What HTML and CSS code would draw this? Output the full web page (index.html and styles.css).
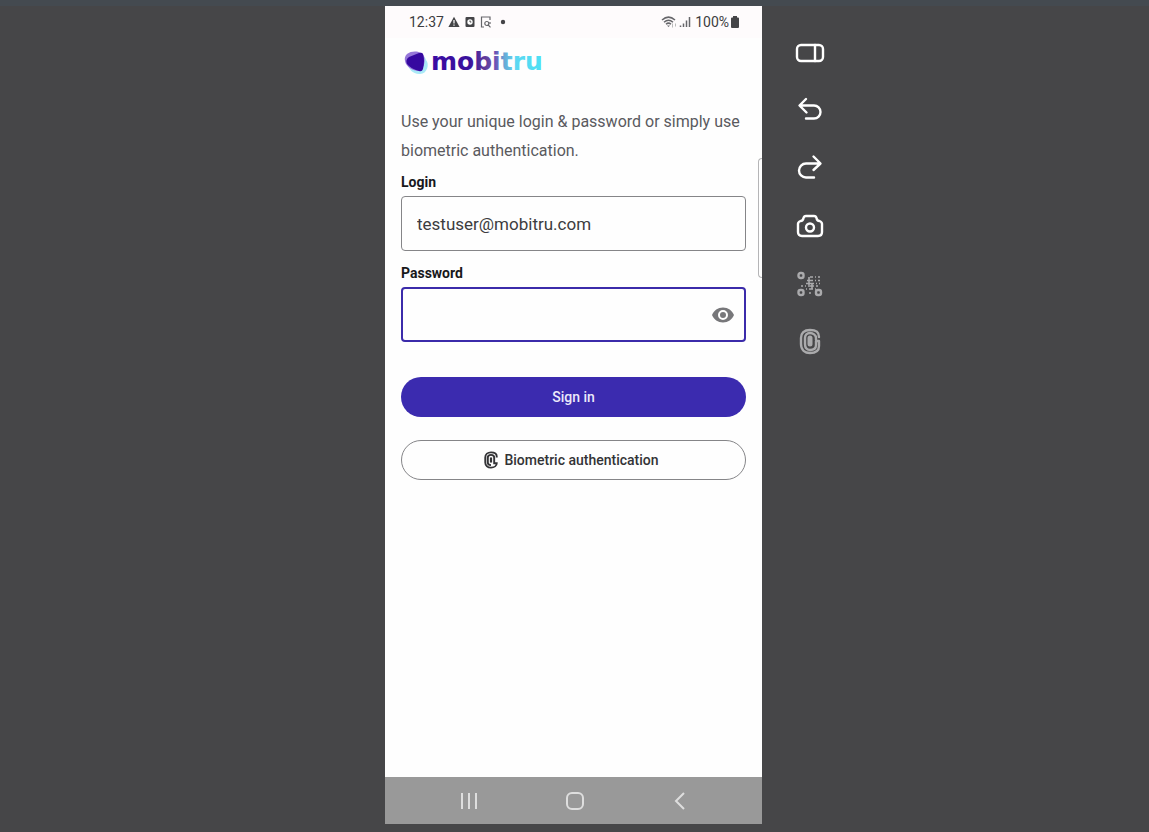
FILE: index.html
```html
<!DOCTYPE html>
<html lang="en">
<head>
<meta charset="utf-8">
<meta name="viewport" content="width=device-width, initial-scale=1">
<title>Mobitru</title>
<link rel="stylesheet" href="styles.css">
</head>
<body>
<div class="page">
  <main class="phone">
    <div class="status">
      <div class="status-group">
        <span>12:37</span>
        <svg width="12" height="12" viewBox="0 0 12 12"><path d="M6 .8 11.6 11H.4Z" fill="#444447"/><path d="M6 4v3.500M6 8.500v1.300" stroke="#fff" stroke-width="1.200"/></svg>
        <svg class="gap" width="10" height="12" viewBox="0 0 10 12"><rect x=".5" y="1" width="9" height="10" rx="1" fill="#444447"/><circle cx="5" cy="6" r="2.700" fill="#fff"/><path d="M5 4.500V6h1.300" fill="none" stroke="#444447"/></svg>
        <svg class="gap" width="12" height="12" viewBox="0 0 12 12" fill="none" stroke="#66666a" stroke-width="1.200"><path d="M4 11H1.500V1H10v3"/><circle cx="6.800" cy="7.500" r="2"/><path d="m8.200 9 2.300 2.300M10 6v2"/></svg>
        <svg class="gap" width="10" height="12" viewBox="0 0 10 12"><circle cx="6" cy="6" r="2.200" fill="#444447"/></svg>
      </div>
      <div class="status-group right">
        <svg width="17" height="14" viewBox="0 0 17 14" fill="none" stroke="#66666a" stroke-width="1.500"><path d="M1 5Q7.500-.800 14 5M3 7.200q4.500-4 9 0M5 9.300q2.500-2.300 5 0"/><path d="m6 10.500 1.500 1.500L9 10.500Z" fill="#66666a" stroke="none"/><path d="M11.500 8.500v4M14.500 8.500v3" stroke="#bbb" stroke-width="1"/></svg>
        <svg width="12" height="12" viewBox="0 0 12 12" stroke="#66666a" stroke-width="1.500"><path d="M1.500 9.500V11M4.500 7.500V11M7.500 4.500V11M10.500 1v10"/></svg>
        <span class="charge">100%</span>
        <svg width="10" height="14" viewBox="0 0 10 14"><path d="M3 1h4v1.500h1q1 0 1 1V12q0 1-1 1H2q-1 0-1-1V3.500q0-1 1-1h1Z" fill="#444447"/></svg>
      </div>
    </div>
    <div class="content">
      <svg class="logo" width="160" height="38" viewBox="0 0 160 38" role="img" aria-label="mobitru">
        <defs>
          <linearGradient id="word" gradientUnits="userSpaceOnUse" x1="30" y1="0" x2="145" y2="0">
            <stop offset="0" stop-color="#3a0ca3"/><stop offset=".32" stop-color="#3a129c"/><stop offset=".46" stop-color="#613e9b"/><stop offset=".54" stop-color="#6951b5"/><stop offset=".62" stop-color="#69a9d6"/><stop offset=".72" stop-color="#5cd8f2"/><stop offset="1" stop-color="#48e2f5"/>
          </linearGradient>
        </defs>
        <path d="M8 14C14 9 22 13 23 18c4 4 1 15-7 14C10 32 5 27 4 20c0-3 2-5 4-6Z" fill="#a9e9f7"/>
        <path d="M4 12c5-4 15-3 17 2 2 7-1 13-5 15C10 29 3 25 2 19q-1-4 2-7Z" fill="#9677d9"/>
        <path d="M16 11q3-1 4 1 2 7 0 15-1 3-4 2-8-2-12-7-2-4 2-7Z" fill="#3609a0"/>
        <text class="word" x="28" y="28">mobitru</text>
      </svg>
      <p class="intro">Use your unique login &amp; password or simply use biometric authentication.</p>
      <form class="form">
        <label for="login">Login</label>
        <input id="login" class="field" type="text" value="testuser@mobitru.com">
        <label for="password" class="next">Password</label>
        <div class="field focused">
          <input id="password" type="password">
          <button type="button" class="plain" aria-label="Show password">
            <svg width="24" height="24" viewBox="0 0 24 24" fill="#77777a"><path d="M12 4.500C7 4.500 2.730 7.610 1 12c1.730 4.390 6 7.500 11 7.500s9.270-3.110 11-7.500c-1.730-4.390-6-7.500-11-7.500ZM12 17a5 5 0 1 1 0-10 5 5 0 0 1 0 10Zm0-8a3 3 0 1 0 0 6 3 3 0 0 0 0-6Z"/></svg>
          </button>
        </div>
        <button type="button" class="btn primary">Sign in</button>
        <button type="button" class="btn outline">
          <svg width="14" height="18" viewBox="0 0 22 28" fill="none" stroke="#333336" stroke-width="3"><path d="M20 10v-1.500C20 4 16 2 11 2S2 5 2 10v8c0 5 4 8 9 8s9-3 9-7h-4v-9q0-4-5-4T6 10v8q0 4 5 4"/><path d="M11 10v8" stroke-width="3.500"/></svg>
          <span>Biometric authentication</span>
        </button>
      </form>
    </div>
    <span class="edge"></span>
    <nav class="nav" aria-label="System">
      <button class="plain" aria-label="Recent apps"><svg width="20" height="20" viewBox="0 0 20 20" fill="none" stroke="#dedede" stroke-width="2"><path d="M3 2v16M10 2v16M17 2v16"/></svg></button>
      <button class="plain" aria-label="Home"><svg width="20" height="20" viewBox="0 0 20 20" fill="none" stroke="#dedede" stroke-width="2"><rect x="2" y="2" width="16" height="16" rx="5"/></svg></button>
      <button class="plain" aria-label="Back"><svg width="20" height="20" viewBox="0 0 20 20" fill="none" stroke="#dedede" stroke-width="2"><path d="M14 2 6 10l8 8"/></svg></button>
    </nav>
  </main>
  <aside class="tools">
    <button class="plain" aria-label="Toggle panel"><svg width="30" height="30" viewBox="0 0 30 30"><rect x="2" y="7" width="26" height="16" rx="4"/><path d="M20 7v16"/></svg></button>
    <button class="plain" aria-label="Rotate left"><svg width="30" height="30" viewBox="0 0 30 30"><path d="M11 3 4.500 9.500l7 7M5 9.500h14a6.500 6.500 0 0 1 0 13h-8"/></svg></button>
    <button class="plain" aria-label="Rotate right"><svg width="30" height="30" viewBox="0 0 30 30"><path d="m18.500 2.500 7 7-7 6.500M25 9.500H11a6.500 6.500 0 0 0 0 14h8"/></svg></button>
    <button class="plain" aria-label="Take screenshot"><svg width="30" height="30" viewBox="0 0 30 30"><path d="M11 4h8q2 0 2.500 2 .500 3 3 3 2.500 1 2.500 3v8q0 4-4 4H7q-4 0-4-4v-8q0-2 2.500-3 2.500 0 3-3Q9 4 11 4Z"/><circle cx="15" cy="15.500" r="4"/></svg></button>
    <button class="plain dim" aria-label="Scan code"><svg width="30" height="30" viewBox="0 0 30 30"><rect x="3.500" y="3" width="5" height="5" rx="2"/><rect x="3.500" y="20" width="5" height="5" rx="2"/><rect x="21" y="20" width="5" height="5" rx="2"/><path class="dots" d="M15 7h3m2 0h1m2 0h2M12 10.500h6m2 0h1m2 0h2M11 13.500h8m2 0h1m2 0h1M6 16h2m2 0h1m2 0h6m2 0h2M11 19h1m2 0h4m2 0h1M14 23h2M14 7v8M17 13v6"/></svg></button>
    <button class="plain dim" aria-label="Fingerprint"><svg width="30" height="30" viewBox="0 0 30 30"><path d="M24 9C24 4 21 2 15 2S6 5 6 10v6c0 6 4 9 9 9s9-2 9-7v-5h-3v4c0 3-2 5-6 5s-5-3-5-6v-6c0-3 2-5 5-5s6 2 6 5v2"/><path d="M15 10v6" stroke-width="5"/></svg></button>
  </aside>
</div>
</body>
</html>
```
FILE: styles.css
```css
* { box-sizing: border-box; }
body {
  margin: 0;
  background: #464648;
  font-family: Roboto, "Liberation Sans", sans-serif;
  color: #3c3c40;
}
.page {
  min-height: 100vh;
  display: grid;
  grid-template-columns: 1fr minmax(0, 377px) 1fr;
  padding: 0 2px 8px 0;
  border-top: 6px solid #444a50;
}
.phone {
  grid-column: 2;
  position: relative;
  display: flex;
  flex-direction: column;
  background: #fefefe;
}
.status {
  display: flex;
  justify-content: space-between;
  height: 32px;
  padding: 0 22px 0 24px;
  background: #fefbfc;
  font-size: 14px;
}
.status-group { display: flex; align-items: center; gap: 4px; }
.status-group.right { gap: 1px; }
.gap { margin-left: 1px; }
.charge { margin-left: 3px; }
.content { flex: 1; padding: 4px 16px 24px; }
.logo { display: block; margin-left: 2px; }
.word {
  font: bold 25px "DejaVu Sans", sans-serif;
  fill: url(#word);
}
.intro {
  margin: 27px 0 0;
  font-size: 16px;
  line-height: 29px;
  color: #5a5a5e;
}
.form { display: flex; flex-direction: column; }
label {
  margin-top: 9px;
  margin-bottom: 6px;
  font-size: 14px;
  line-height: 16px;
  font-weight: 700;
  color: #18181b;
}
.next { margin-top: 14px; }
.field {
  width: 100%;
  height: 55px;
  padding: 0 15px;
  border: 1px solid #858588;
  border-radius: 4px;
  background: #fefefe;
  font: 17px Roboto, sans-serif;
  color: #3c3c40;
}
.focused {
  display: flex;
  align-items: center;
  padding: 0 9px 0 14px;
  border: 2px solid #3b2baa;
}
.focused input {
  flex: 1;
  min-width: 0;
  border: 0;
  outline: 0;
  background: none;
  font: inherit;
}
.plain { display: flex; padding: 0; border: 0; background: none; }
.btn {
  display: flex;
  align-items: center;
  justify-content: center;
  gap: 6px;
  height: 40px;
  border-radius: 20px;
  font: 500 14px Roboto, sans-serif;
}
.primary {
  margin-top: 35px;
  border: 0;
  background: #3b2baf;
  color: #ece9fa;
}
.outline {
  margin-top: 23px;
  padding: 0 10px 0 6px;
  border: 1px solid #858588;
  background: #fefefe;
  color: #333336;
}
.edge {
  position: absolute;
  top: 152px;
  right: 0;
  width: 4px;
  height: 120px;
  border: 1px solid #b5b5b7;
  border-right: 0;
  border-radius: 4px 0 0 4px;
}
.nav {
  display: flex;
  align-items: center;
  justify-content: space-between;
  height: 47px;
  padding: 0 72px 0 74px;
  background: #999;
}
.tools {
  display: flex;
  flex-direction: column;
  align-items: flex-start;
  gap: 28px;
  padding: 32px 0 0 33px;
}
.tools svg {
  fill: none;
  stroke: #fff;
  stroke-width: 2.4;
  stroke-linecap: round;
  stroke-linejoin: round;
}
.tools .dim svg { stroke: #aaaaac; }
.tools .dots { stroke-width: 1.6; stroke-linecap: butt; }
```
